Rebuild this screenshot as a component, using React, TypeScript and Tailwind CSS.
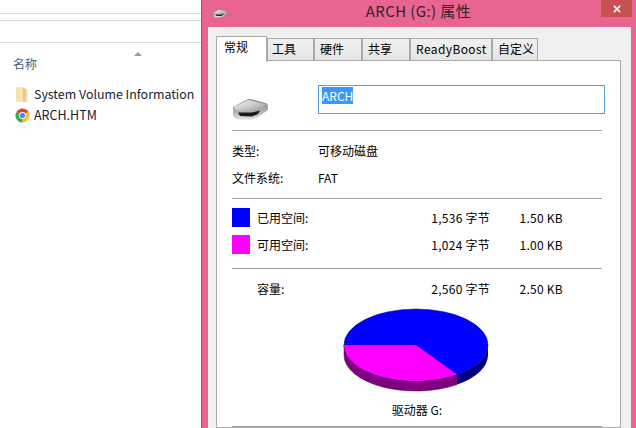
const sans = "font-['Noto_Sans_CJK_SC','Noto_Sans',sans-serif]";

function DriveIcon({ className, id }: { className: string; id: string }) {
  return (
    <svg viewBox="0 0 36 24" className={className}>
      <defs>
        <linearGradient id={`${id}-top`} x1="0" y1="0" x2="1" y2="1">
          <stop offset="0" stopColor="#f4f4f4" />
          <stop offset="0.6" stopColor="#c4c4c4" />
          <stop offset="1" stopColor="#8c8c8c" />
        </linearGradient>
        <linearGradient id={`${id}-body`} x1="0" y1="0" x2="0" y2="1">
          <stop offset="0" stopColor="#8a8a8a" />
          <stop offset="0.7" stopColor="#b8b8b8" />
          <stop offset="1" stopColor="#ececec" />
        </linearGradient>
      </defs>
      <path
        d="M1 9 L15 1.5 Q17 0.5 20 1.5 L34 5 Q36 6 36 8 L36 12 L26 19 Q22 22 16 22 L6 22 Q1 21 1 16 Z"
        fill={`url(#${id}-body)`}
      />
      <path d="M2 9 L16 2 L34 6.5 L29 11 Q24 13 14 13 L4 12 Z" fill={`url(#${id}-top)`} />
      <path d="M6 14.5 L20 14.5 L28 12.5 L26 16 L20 18.5 L8 18 Z" fill="#1c1c1c" />
    </svg>
  );
}

function FolderIcon() {
  return (
    <svg viewBox="0 0 14 17" className="w-[14px] h-[17px] shrink-0">
      <path d="M1 1 H7 V16 H2 Q1 16 1 15 Z" fill="#f5e3ae" />
      <path d="M7 1 L11 3 V16 H7 Z" fill="#e8cc88" />
      <path d="M11 3 L13 4 V15 L11 16 Z" fill="#f7e8bf" />
      <path d="M7 1 V16" stroke="#fff6da" strokeWidth="0.8" />
    </svg>
  );
}

function ChromeIcon() {
  return (
    <svg viewBox="0 0 16 16" className="w-[15px] h-[15px] shrink-0">
      <path d="M1.5 4.25 A7.5 7.5 0 0 1 14.5 4.25 L8 8 Z" fill="#dc4437" />
      <path d="M14.5 4.25 A7.5 7.5 0 0 1 8 15.5 L8 8 Z" fill="#fbc02d" />
      <path d="M8 15.5 A7.5 7.5 0 0 1 1.5 4.25 L8 8 Z" fill="#3fa757" />
      <circle cx="8" cy="8" r="3.7" fill="#f4f4f4" />
      <circle cx="8" cy="8" r="2.7" fill="#4a86e8" />
    </svg>
  );
}

function PieChart() {
  return (
    <svg viewBox="0 0 146 86" className="w-[146px] h-[86px]">
      <path d="M1 37 V47 A72 36 0 0 0 114 76.6 V66.6 A72 36 0 0 1 1 37 Z" fill="#800080" stroke="#400040" strokeWidth="0.5" />
      <path d="M114 66.6 V76.6 A72 36 0 0 0 145 47 V37 A72 36 0 0 1 114 66.6 Z" fill="#000080" />
      <ellipse cx="73" cy="37" rx="72" ry="36" fill="#0000ff" stroke="#000060" strokeWidth="0.5" />
      <path d="M73 37 H1 A72 36 0 0 0 114 66.6 Z" fill="#ff00ff" />
    </svg>
  );
}

function Tab({ label, active, className }: { label: string; active?: boolean; className: string }) {
  return (
    <div
      className={`flex items-center border border-b-0 border-[#a9a9a9] text-[12px] text-black whitespace-nowrap ${
        active
          ? "h-[26px] pb-[5px] bg-white relative z-10 -mb-[2px]"
          : "h-[22px] pb-[2px] bg-gradient-to-b from-[#f0f0f0] to-[#e5e5e5]"
      } ${className}`}
    >
      {label}
    </div>
  );
}

function Divider() {
  return <div className="h-px bg-[#a0a0a0] w-[370px]" />;
}

function SpaceRow({ color, label, bytes, size }: { color: string; label: string; bytes: string; size: string }) {
  return (
    <div className="flex items-center h-[19px] text-[12px] text-black">
      <div className={`w-[18px] h-[19px] ${color}`} />
      <span className="ml-[7px] w-[147px]">{label}</span>
      <span className="w-[86px] text-right tracking-[0.25px]">{bytes}</span>
      <span className="w-[73px] text-right tracking-[0.25px]">{size}</span>
    </div>
  );
}

export default function App() {
  return (
    <div className={`flex w-[636px] h-[428px] overflow-hidden bg-white ${sans}`}>
      {/* Explorer list behind the dialog */}
      <div className="w-[201px] shrink-0 flex flex-col">
        <div className="h-[14px] border-b border-[#d9d9d9]" />
        <div className="h-[7px] border-b border-[#d9d9d9]" />
        <div className="h-[22px] border-b border-[#d9d9d9]" />
        <div className="relative h-[13px]">
          <svg viewBox="0 0 8 4" className="absolute left-[134px] top-[9px] w-2 h-1">
            <path d="M0 4 L4 0 L8 4 Z" fill="#7ea3c0" />
          </svg>
        </div>
        <div className="pl-[13px] text-[12px] leading-[16px] text-[#4c607a]">名称</div>
        <div className="mt-[12px] flex items-center h-[20px] pl-[15px] gap-[5px] text-[12.4px] text-[#1a1a2e]">
          <FolderIcon />
          <span className="whitespace-nowrap">System Volume Information</span>
        </div>
        <div className="mt-[1px] flex items-center h-[20px] pl-[15px] gap-1 text-[12.5px] text-[#1a1a2e]">
          <ChromeIcon />
          <span>ARCH.HTM</span>
        </div>
      </div>

      {/* Properties dialog */}
      <div className="flex-1 flex flex-col bg-[#e76590] border-l border-[#b8476f] pl-[6px] pr-2">
        <div className="relative h-[27px] shrink-0 flex items-center justify-center pb-[4px] text-[15px] tracking-[0.4px] text-[#33222a] pr-[2px]">
          <div className="absolute left-[4px] top-[9px]">
            <DriveIcon id="small" className="w-[16px] h-[9px]" />
          </div>
          ARCH (G:) 属性
          <div className="absolute right-[-1px] top-0 w-[31px] h-[17px] bg-[#c75050] flex items-center justify-center text-white">
            <svg viewBox="0 0 10 10" className="w-2 h-2">
              <path d="M1 1 L9 9 M9 1 L1 9" stroke="#fff" strokeWidth="2" />
            </svg>
          </div>
        </div>
        <div className="flex-1 bg-[#f0f0f0] pl-2 pr-[10px] pt-[9px] flex flex-col min-h-0">
          <div className="flex items-end h-[24px] shrink-0">
            <Tab label="常规" active className="w-[51px] pl-[7px]" />
            <Tab label="工具" className="w-[47px] pl-[4px]" />
            <Tab label="硬件" className="w-[48px] pl-[5px]" />
            <Tab label="共享" className="w-[48px] pl-[5px]" />
            <Tab label="ReadyBoost" className="w-[82px] pl-[5px] tracking-[0.4px]" />
            <Tab label="自定义" className="w-[46px] pl-[5px]" />
          </div>
          <div className="flex-1 bg-white border border-[#a9a9a9] px-[15px] flex flex-col min-h-0">
            <div className="flex h-[69px] shrink-0 items-start">
              <DriveIcon id="large" className="w-9 h-6 mt-[37px]" />
              <div className="ml-[50px] mt-[24px] w-[287px] h-[29px] border border-[#569de5] px-[3px] pt-[1px] text-[12px] leading-[18px]">
                <span className="bg-[#3399ff] text-white">ARCH</span>
              </div>
            </div>
            <Divider />
            <div className="flex text-[12px] text-black h-[27px] mt-[7px] items-center">
              <span className="w-[86px]">类型:</span>
              <span>可移动磁盘</span>
            </div>
            <div className="flex text-[12px] text-black h-[27px] items-center">
              <span className="w-[86px]">文件系统:</span>
              <span>FAT</span>
            </div>
            <div className="mt-[7px]"><Divider /></div>
            <div className="mt-[9px]">
              <SpaceRow color="bg-[#0000ff]" label="已用空间:" bytes="1,536 字节" size="1.50 KB" />
            </div>
            <div className="mt-[8px]">
              <SpaceRow color="bg-[#ff00ff]" label="可用空间:" bytes="1,024 字节" size="1.00 KB" />
            </div>
            <div className="mt-[14px]"><Divider /></div>
            <div className="mt-[10px]">
              <SpaceRow color="" label="容量:" bytes="2,560 字节" size="2.50 KB" />
            </div>
            <div className="mt-[10px] pl-[111px] shrink-0">
              <PieChart />
            </div>
            <div className="mt-[7px] text-center text-[12px] text-black w-[370px]">驱动器 G:</div>
            <div className="mt-[7px]"><Divider /></div>
          </div>
        </div>
      </div>
    </div>
  );
}
